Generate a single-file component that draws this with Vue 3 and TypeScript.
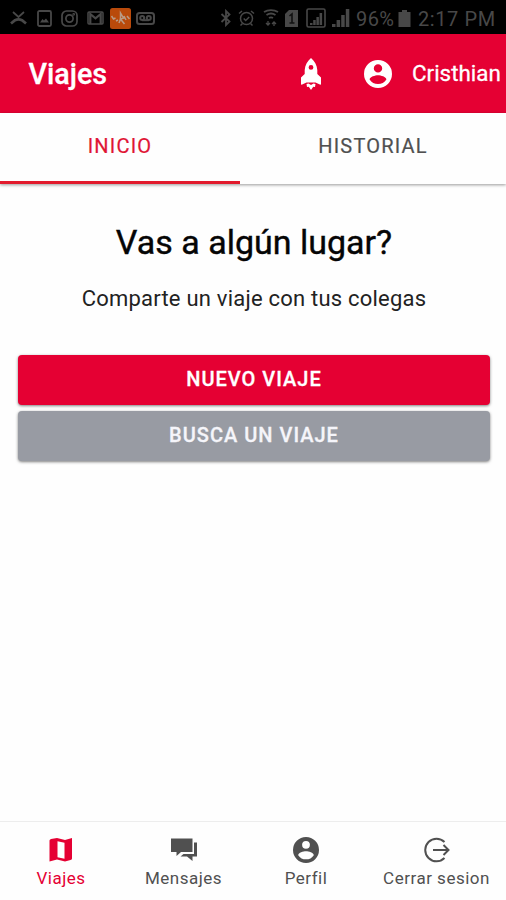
<script setup lang="ts">
import { ref } from 'vue'

type TabId = 'inicio' | 'historial'
type NavId = 'viajes' | 'mensajes' | 'perfil' | 'salir'

const tabs: { id: TabId; label: string }[] = [
  { id: 'inicio', label: 'INICIO' },
  { id: 'historial', label: 'HISTORIAL' },
]
const nav: { id: NavId; label: string }[] = [
  { id: 'viajes', label: 'Viajes' },
  { id: 'mensajes', label: 'Mensajes' },
  { id: 'perfil', label: 'Perfil' },
  { id: 'salir', label: 'Cerrar sesion' },
]
const activeTab = ref<TabId>('inicio')
const activeNav = ref<NavId>('viajes')
</script>

<template>
  <div class="screen">
    <div class="status">
      <div class="notifications">
        <svg width="17" height="14" viewBox="0 0 17 14" fill="none" stroke="currentColor">
          <path d="M3 1l5.500 5L14 1" stroke-width="1.700" />
          <path d="M1 12.500l4-3.300q3.500-1.500 7 0l4 3.300" stroke-width="2.800" />
        </svg>
        <svg class="picture" width="15" height="17" viewBox="0 0 15 17" fill="none" stroke="currentColor" stroke-width="1.8">
          <rect x="1" y="1" width="13" height="15" rx="1.5" />
          <path d="M3 12.500h9l-3-4-2 2-1.500-1.500z" fill="currentColor" stroke="none" />
        </svg>
        <svg class="instagram" width="17" height="17" viewBox="0 0 17 17" fill="none" stroke="currentColor" stroke-width="1.7">
          <rect x="1" y="1" width="15" height="15" rx="4.5" />
          <circle cx="8.5" cy="8.5" r="3.6" />
          <circle cx="12.7" cy="4.3" r=".5" />
        </svg>
        <svg class="mail" width="17" height="14" viewBox="0 0 17 14" fill="none" stroke="currentColor">
          <rect x="1" y="1" width="15" height="12" rx="1" stroke-width="1.5" />
          <path d="M3.3 13V3l5.2 4.4L13.700 3v10" stroke-width="2.2" />
        </svg>
        <svg class="app" width="21" height="21" viewBox="0 0 21 21" fill="none">
          <rect width="21" height="21" rx="2.500" fill="#b94a0b" />
          <path d="M1.500 8l2 3 2-1M6 13l2-1M9 15l1.500-4V5l3 5-3 1 4 5M14 8l2 4M17 8l2.500 3" stroke="#b99b86" stroke-width="1.500" />
        </svg>
        <svg class="voicemail" width="19" height="13" viewBox="0 0 19 13" fill="none" stroke="currentColor" stroke-width="2">
          <rect x="1" y="1" width="17" height="11" rx="2.500" />
          <circle cx="6.200" cy="6" r="2" />
          <circle cx="12.800" cy="6" r="2" />
          <path d="M6 8.200h7" />
        </svg>
      </div>
      <div class="system">
        <svg width="12" height="18" viewBox="0 0 12 18" fill="none" stroke="currentColor" stroke-width="1.800">
          <path d="M1.500 5l8 7.500L6 16V2l3.500 3.500-8 7.500" />
        </svg>
        <svg class="alarm" width="17" height="18" viewBox="0 0 17 18" fill="none" stroke="currentColor" stroke-width="1.500">
          <circle cx="8.500" cy="9.500" r="6" />
          <path d="M1 4.500L4 2M13 2l3 2.500M4.500 14.500l-2 2M12.500 14.500l2 2M5.700 9.500l2 2 3.500-3.500" />
        </svg>
        <svg class="wifi" width="16" height="18" viewBox="0 0 16 18" fill="none" stroke="currentColor">
          <path d="M1 3c4-2.500 10-2.500 14 0M3.500 6c3-2 6-2 9 0M6 9c1.500-1 2.500-1 4 0" stroke-width="1.800" />
          <path d="M5 12v4M3 14l2 2 2-2M11 17v-4M9 15l2-2 2 2" stroke-width="1.300" />
        </svg>
        <svg class="sim" width="13" height="17" viewBox="0 0 13 17">
          <path d="M4 0h9v17H0V4z" fill="currentColor" />
          <path d="M4.500 6l2.500-2v9M4.500 13h5" fill="none" stroke="#111" stroke-width="1.600" />
        </svg>
        <svg class="boxed" width="20" height="20" viewBox="0 0 20 20" fill="currentColor">
          <rect x="1" y="1" width="18" height="18" rx="1.500" fill="none" stroke="currentColor" stroke-width="1.600" />
          <path d="M4 15h2.500v2H4zM7.200 12h2.500v5H7.200zM10.400 9h2.500v8h-2.500zM13.600 5h2.500v12h-2.500z" />
        </svg>
        <svg class="signal" width="18" height="18" viewBox="0 0 18 18" fill="currentColor">
          <path d="M0 15h3.500v3H0zM4.600 11h3.500v7H4.600zM9.200 6h3.500v12H9.200zM13.800 0h3.500v18h-3.500z" />
        </svg>
        <span class="percent">96%</span>
        <svg class="battery" width="13" height="17" viewBox="0 0 13 17" fill="currentColor">
          <path d="M4 0h5v2h3.500v15H.5V2H4z" />
        </svg>
        <span class="clock">2:17 PM</span>
      </div>
    </div>

    <header class="toolbar">
      <h1 class="title">Viajes</h1>
      <svg class="rocket" width="20" height="32" viewBox="0 0 20 32" fill="#fff">
        <path fill-rule="evenodd" d="M10 0C6.500 3 4 7 3.700 12v4L0 19.500V26q0 1 1.200.6L5.500 24.500h9l4.300 2.100q1.200.4 1.200-.6v-6.500L16.300 16v-4C16 7 13.500 3 10 0zM10 7a2.400 2.400 0 1 1 0 4.800A2.400 2.400 0 0 1 10 7z" />
        <path d="M5.500 26l2-.5L10 27l2.500-1.500 2 .5-.5 3-1.800-.2L10 32l-2.200-3.200L6 29z" />
      </svg>
      <svg class="account" width="28" height="28" viewBox="2 2 20 20" fill="#fff">
        <path d="M12 2a10 10 0 1 0 0 20 10 10 0 0 0 0-20zm0 3a3 3 0 1 1 0 6 3 3 0 0 1 0-6zm0 14.200a7.200 7.200 0 0 1-6-3.220c.03-1.990 4-3.080 6-3.080s5.970 1.090 6 3.080a7.200 7.200 0 0 1-6 3.220z" />
      </svg>
      <span class="user">Cristhian</span>
    </header>

    <nav class="tabs">
      <button
        v-for="tab in tabs"
        :key="tab.id"
        class="tab"
        :class="[tab.id, { active: activeTab === tab.id }]"
        @click="activeTab = tab.id"
      >{{ tab.label }}</button>
    </nav>

    <main class="content">
      <h2 class="heading">Vas a algún lugar?</h2>
      <p class="lead">Comparte un viaje con tus colegas</p>
      <button class="btn primary">NUEVO VIAJE</button>
      <button class="btn secondary">BUSCA UN VIAJE</button>
    </main>

    <footer class="bottom">
      <button
        v-for="item in nav"
        :key="item.id"
        class="item"
        :class="[item.id, { active: activeNav === item.id }]"
        @click="activeNav = item.id"
      >
        <svg v-if="item.id === 'viajes'" width="26" height="26" viewBox="0 0 26 26" fill="currentColor">
          <path fill-rule="evenodd" d="M1.500 3.500Q1.500 2.500 3 2L9 1l8 2 7-2v20.500q0 1-1.500 1.500L17 24.500l-8-2-7.500 2zM9.500 4.300v15.900l7 1.500V5.800z" />
        </svg>
        <svg v-else-if="item.id === 'mensajes'" width="26" height="26" viewBox="0 0 26 26" fill="currentColor">
          <path d="M0 1.500h21.500V15H10L5.500 19v-4H0z" />
          <path d="M23 5.500h3v14h-4.500V24L16 19.500H9.500l3-2.500H23z" />
        </svg>
        <svg v-else-if="item.id === 'perfil'" width="26" height="26" viewBox="2 2 20 20" fill="currentColor">
          <path d="M12 2a10 10 0 1 0 0 20 10 10 0 0 0 0-20zm0 3a3 3 0 1 1 0 6 3 3 0 0 1 0-6zm0 14.200a7.200 7.200 0 0 1-6-3.220c.03-1.990 4-3.080 6-3.080s5.970 1.090 6 3.080a7.200 7.200 0 0 1-6 3.220z" />
        </svg>
        <svg v-else width="26" height="26" viewBox="0 0 26 26" fill="none" stroke="currentColor" stroke-width="2">
          <path d="M20.500 5a11.300 11.300 0 1 0 0 16M9 13h15M19.500 8l5 5-5 5" />
        </svg>
        <span class="label">{{ item.label }}</span>
      </button>
    </footer>
  </div>
</template>

<style>
body {
  margin: 0;
  background: #fefefe;
}
</style>

<style scoped>
.screen {
  display: flex;
  flex-direction: column;
  width: 506px;
  height: 900px;
  overflow: hidden;
  background: #fefefe;
  color: #050505;
  font-family: Roboto, sans-serif;
}
button {
  border: 0;
  padding: 0;
  background: none;
  font-family: inherit;
}
svg {
  display: block;
  flex: none;
}
.status {
  display: flex;
  justify-content: space-between;
  height: 34px;
  flex: none;
  padding: 2px 10px 0;
  box-sizing: border-box;
  background: #000;
  color: #484848;
}
.notifications,
.system {
  display: flex;
  align-items: center;
}
.picture { margin-left: 10px; }
.instagram { margin-left: 9px; }
.mail { margin-left: 9px; }
.app { margin-left: 6px; }
.voicemail { margin-left: 5px; }
.alarm { margin-left: 6px; }
.wifi { margin-left: 8px; }
.sim { margin-left: 6px; }
.boxed { margin-left: 8px; }
.signal { margin-left: 6px; }
.percent,
.clock {
  padding-top: 1px;
  font-size: 20px;
  line-height: 24px;
  white-space: nowrap;
}
.percent {
  width: 39px;
  margin-left: 6px;
  letter-spacing: 0.4px;
}
.battery { margin-left: 3px; }
.clock {
  width: 78px;
  margin-left: 7px;
  letter-spacing: 0.6px;
}
.toolbar {
  display: flex;
  align-items: center;
  height: 78.5px;
  flex: none;
  padding: 2px 5px 0 28.5px;
  box-sizing: border-box;
  background: #e50033;
  color: #fff;
}
.title {
  flex: 1;
  margin: 0;
  font-size: 28.7px;
  font-weight: 500;
  line-height: 34px;
  -webkit-text-stroke: 0.3px;
}
.rocket { margin-right: 43px; }
.account { margin-right: 20px; }
.user {
  width: 89px;
  font-size: 22.4px;
  line-height: 30px;
  padding-bottom: 2px;
  white-space: nowrap;
  -webkit-text-stroke: 0.3px;
}
.tabs {
  display: flex;
  flex: none;
  height: 71px;
  background: #fefefe;
  box-shadow: 0 1px 3px rgba(0, 0, 0, 0.4);
}
.tab {
  flex: 1;
  padding-bottom: 1px;
  border-bottom: 3px solid transparent;
  font-size: 20px;
  letter-spacing: 1.2px;
  color: #505050;
  -webkit-text-stroke: 0.2px;
}
.tab.inicio {
  flex: 0 0 240px;
}
.tab.active {
  border-bottom-color: #e21b2d;
  color: #e01535;
}
.content {
  display: flex;
  flex: 1;
  flex-direction: column;
  padding: 37px 16px 0 18px;
}
.heading {
  margin: 0;
  font-size: 34px;
  font-weight: 400;
  line-height: 42px;
  text-align: center;
  -webkit-text-stroke: 0.4px;
}
.lead {
  margin: 21px 0 41px;
  font-size: 22px;
  line-height: 30px;
  letter-spacing: 0.22px;
  text-align: center;
  color: #222;
}
.btn {
  height: 50px;
  padding-bottom: 2px;
  border-radius: 4px;
  color: #fff;
  font-size: 20px;
  font-weight: 500;
  letter-spacing: 1px;
  -webkit-text-stroke: 0.3px;
  box-shadow: 0 1px 3px rgba(0, 0, 0, 0.5);
}
.primary { background: #e50033; }
.secondary {
  margin-top: 6px;
  background: #989ba3;
  color: #f5f5fa;
}
.bottom {
  display: grid;
  grid-template-columns: 122px 123px 122px 139px;
  height: 79px;
  flex: none;
  box-sizing: border-box;
  border-top: 1px solid #ededed;
}
.item {
  display: flex;
  flex-direction: column;
  align-items: center;
  padding-top: 15px;
  color: #505050;
}
.item.active { color: #e50033; }
.label {
  margin-top: 4px;
  font-size: 17px;
  line-height: 22px;
  letter-spacing: 0.5px;
  white-space: nowrap;
}
</style>
